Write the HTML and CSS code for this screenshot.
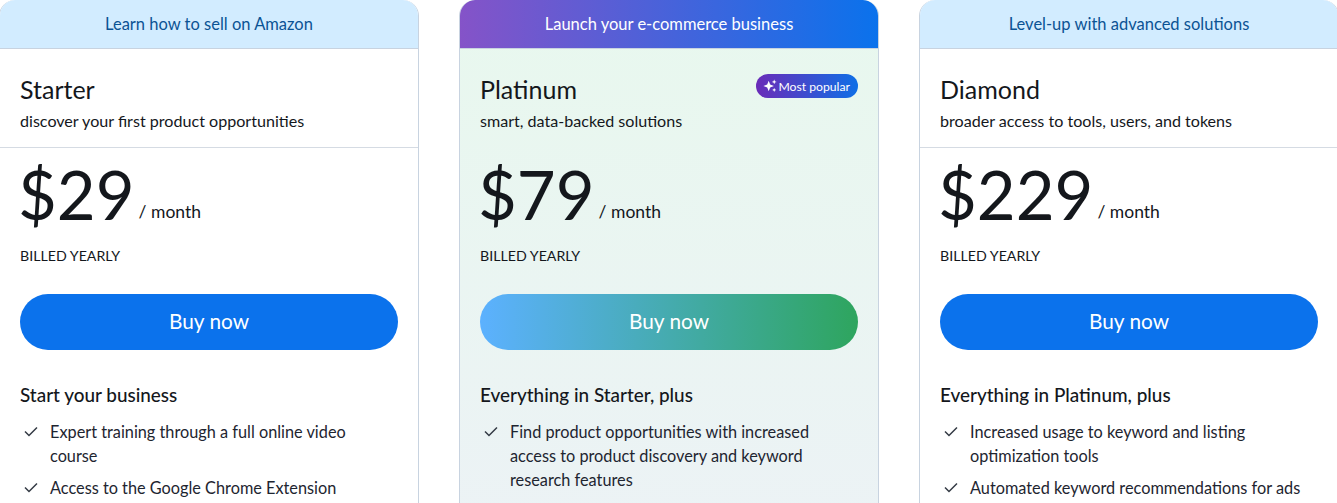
FILE: index.html
```html
<!DOCTYPE html>
<html lang="en">
<head>
  <meta charset="UTF-8">
  <title>Pricing</title>
  <link rel="stylesheet" href="styles.css">
</head>
<body>
  <section class="plans">
    <div class="plan">
      <div class="plan-top">Learn how to sell on Amazon</div>
      <div class="plan-head">
        <h2>Starter</h2>
        <p>discover your first product opportunities</p>
      </div>
      <div class="plan-body">
        <div class="price"><span class="amount">$29</span><span class="per">/ month</span></div>
        <div class="billed">BILLED YEARLY</div>
        <a class="buy" href="#">Buy now</a>
        <h3>Start your business</h3>
        <ul>
          <li><svg class="check" viewBox="0 0 16 16"><path d="M2 8.5l4 4 8-8"/></svg><span>Expert training through a full online video course</span></li>
          <li><svg class="check" viewBox="0 0 16 16"><path d="M2 8.5l4 4 8-8"/></svg><span>Access to the Google Chrome Extension</span></li>
        </ul>
      </div>
    </div>

    <div class="plan featured">
      <div class="plan-top">Launch your e-commerce business</div>
      <div class="plan-head">
        <h2>Platinum</h2>
        <p>smart, data-backed solutions</p>
        <span class="badge">
          <svg viewBox="0 0 16 16"><path d="M6.5 2l1.7 4.3 4.3 1.7-4.3 1.7-1.7 4.3-1.7-4.3-4.3-1.7 4.3-1.7z"/><path d="M12.8 .5l.8 2 2 .8-2 .8-.8 2-.8-2-2-.8 2-.8z"/><path d="M12.8 10.2l.7 1.6 1.6.7-1.6.7-.7 1.6-.7-1.6-1.6-.7 1.6-.7z"/></svg>
          Most popular
        </span>
      </div>
      <div class="plan-body">
        <div class="price"><span class="amount">$79</span><span class="per">/ month</span></div>
        <div class="billed">BILLED YEARLY</div>
        <a class="buy" href="#">Buy now</a>
        <h3>Everything in Starter, plus</h3>
        <ul>
          <li><svg class="check" viewBox="0 0 16 16"><path d="M2 8.5l4 4 8-8"/></svg><span>Find product opportunities with increased access to product discovery and keyword research features</span></li>
        </ul>
      </div>
    </div>

    <div class="plan">
      <div class="plan-top">Level-up with advanced solutions</div>
      <div class="plan-head">
        <h2>Diamond</h2>
        <p>broader access to tools, users, and tokens</p>
      </div>
      <div class="plan-body">
        <div class="price"><span class="amount">$229</span><span class="per">/ month</span></div>
        <div class="billed">BILLED YEARLY</div>
        <a class="buy" href="#">Buy now</a>
        <h3>Everything in Platinum, plus</h3>
        <ul>
          <li><svg class="check" viewBox="0 0 16 16"><path d="M2 8.5l4 4 8-8"/></svg><span>Increased usage to keyword and listing optimization tools</span></li>
          <li><svg class="check" viewBox="0 0 16 16"><path d="M2 8.5l4 4 8-8"/></svg><span>Automated keyword recommendations for ads</span></li>
        </ul>
      </div>
    </div>
  </section>
</body>
</html>
```

FILE: styles.css
```css
html, body {
  height: 503px;
  overflow: hidden;
}
body {
  margin: 0;
  background-color: #fff;
  color: #14171c;
  font-family: 'Lato', 'Open Sans', sans-serif;
}
.plans {
  display: grid;
  grid-template-columns: repeat(3, 420px);
  column-gap: 40px;
  margin-left: -1px;
}
.plan {
  height: 503px;
  overflow: hidden;
  border: 1px solid #c8d3e0;
  border-top: none;
  border-bottom: none;
  border-radius: 16px 16px 0 0;
}
.featured {
  background: linear-gradient(180deg, #e8f8ee 0%, #edf1f7 130%);
}
.plan-top {
  height: 48px;
  margin: 0 -1px;
  border-radius: 16px 16px 0 0;
  border-bottom: 1px solid #c8d3e0;
  background-color: #d2ecff;
  color: #0b5394;
  font-size: 16.5px;
  line-height: 49px;
  text-align: center;
}
.featured .plan-top {
  background: linear-gradient(90deg, #8553c8 0%, #0a72ec 100%);
  color: #fff;
}
.plan-head {
  position: relative;
  height: 98px;
  padding: 0 20px;
  border-bottom: 1px solid #d5dbe3;
}
.featured .plan-head {
  border-bottom-color: transparent;
}
.plan-head h2 {
  margin: 0;
  padding-top: 24px;
  font-size: 25px;
  font-weight: 400;
  line-height: 32px;
}
.plan-head p {
  margin: 4px 0 0;
  font-size: 16.1px;
  line-height: 24px;
}
.badge {
  position: absolute;
  top: 25px;
  right: 20px;
  display: flex;
  align-items: center;
  gap: 1px;
  height: 24px;
  padding: 0 8px 0 7px;
  border-radius: 12px;
  background: linear-gradient(90deg, #6a2cb8 0%, #0f6fe6 100%);
  color: #fff;
  font-size: 12.2px;
}
.badge svg {
  width: 14px;
  height: 14px;
  fill: #fff;
}
.plan-body {
  padding: 0 20px;
}
.price {
  display: flex;
  align-items: baseline;
  height: 92px;
  margin-left: -2px;
}
.amount {
  font-size: 67px;
  line-height: 92px;
  font-weight: 400;
}
.per {
  margin-left: 4px;
  font-size: 17.5px;
  transform: translateY(-2px);
}
.billed {
  margin-top: 4px;
  font-size: 14.2px;
  line-height: 24px;
}
.buy {
  display: block;
  margin-top: 26px;
  height: 56px;
  border-radius: 28px;
  background-color: #0b72ec;
  color: #fff;
  font-size: 20.8px;
  line-height: 54px;
  text-align: center;
  text-decoration: none;
}
.featured .buy {
  background: linear-gradient(90deg, #5cb1ff 0%, #2ea55e 100%);
}
.plan-body h3 {
  margin: 33px 0 0;
  font-size: 18.9px;
  font-weight: 500;
  line-height: 24px;
}
.plan-body ul {
  margin: 13px 0 0;
  padding: 0;
  list-style: none;
}
.plan-body li {
  display: flex;
  gap: 11px;
  padding: 0 10px 0 3px;
  font-size: 16.3px;
  line-height: 24px;
  margin-bottom: 8px;
  color: #1e2530;
}
.check {
  flex: none;
  width: 16px;
  height: 16px;
  margin-top: 3px;
  fill: none;
  stroke: #333a44;
  stroke-width: 1.5;
}
```
